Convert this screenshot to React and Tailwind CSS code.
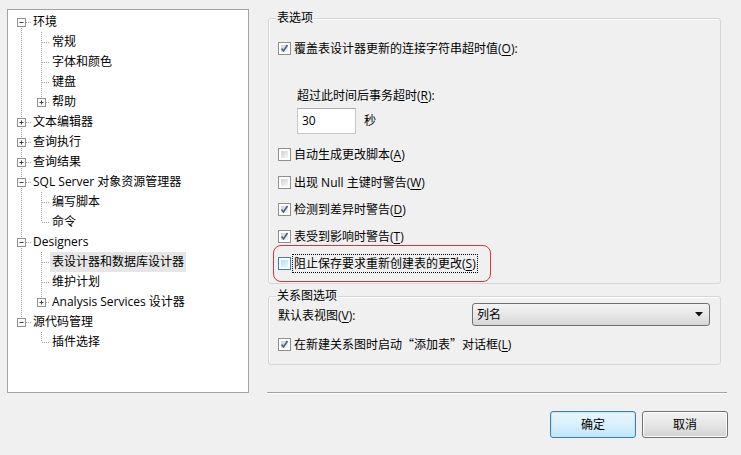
import React from "react";

const tree = [
  { label: "环境", level: 0, box: "minus" },
  { label: "常规", level: 1 },
  { label: "字体和颜色", level: 1 },
  { label: "键盘", level: 1 },
  { label: "帮助", level: 1, box: "plus" },
  { label: "文本编辑器", level: 0, box: "plus" },
  { label: "查询执行", level: 0, box: "plus" },
  { label: "查询结果", level: 0, box: "plus" },
  { label: "SQL Server 对象资源管理器", level: 0, box: "minus" },
  { label: "编写脚本", level: 1 },
  { label: "命令", level: 1 },
  { label: "Designers", level: 0, box: "minus" },
  { label: "表设计器和数据库设计器", level: 1, selected: true },
  { label: "维护计划", level: 1 },
  { label: "Analysis Services 设计器", level: 1, box: "plus" },
  { label: "源代码管理", level: 0, box: "minus" },
  { label: "插件选择", level: 1 },
];

// vertical runs for child lines: [x, y1, y2]
const childRuns = [
  [33.5, 20, 90],
  [33.5, 180, 210],
  [33.5, 240, 290],
  [33.5, 320, 330],
];

function TreeLines() {
  return (
    <svg className="absolute left-0 top-[2px]" width="240" height="380">
      <g stroke="#a0a0a0" strokeWidth="1" strokeDasharray="1 1">
        <line x1="13.5" y1="10" x2="13.5" y2="310" />
        {childRuns.map(([x, a, b], i) => (
          <line key={i} x1={x} y1={a} x2={x} y2={b} />
        ))}
        {tree.map((t, i) => {
          const y = i * 20 + 10.5;
          if (t.level === 0) return <line key={i} x1="18" y1={y} x2="23" y2={y} />;
          return <line key={i} x1={t.box ? 38 : 34} y1={y} x2="42" y2={y} />;
        })}
      </g>
      {tree.map((t, i) => {
        if (!t.box) return null;
        const cx = t.level === 0 ? 13 : 33;
        const y = i * 20 + 6;
        return (
          <g key={"b" + i}>
            <rect x={cx - 3.5} y={y + 0.5} width="8" height="8" fill="#fbfbfb" stroke="#919191" />
            <line x1={cx - 1.5} y1={y + 4.5} x2={cx + 2.5} y2={y + 4.5} stroke="#404040" />
            {t.box === "plus" && (
              <line x1={cx + 0.5} y1={y + 2.5} x2={cx + 0.5} y2={y + 6.5} stroke="#404040" />
            )}
          </g>
        );
      })}
    </svg>
  );
}

function Key({ text, k, after = "" }) {
  return (
    <span>
      {text}(<span className="underline underline-offset-2">{k}</span>){after}
    </span>
  );
}

function Checkbox({ checked, hover }) {
  return (
    <span
      className={
        "relative inline-flex w-[13px] h-[13px] shrink-0 p-[2px] border bg-white " +
        (hover ? "border-[#3c7fb1]" : "border-[#8f8f8f]")
      }
    >
      <span
        className={
          "w-full h-full bg-gradient-to-br " +
          (hover ? "from-[#b1dffd] to-[#e9f7fe]" : "from-[#d2d2d2] to-[#f6f6f6]")
        }
      />
      {checked && (
        <svg className="absolute left-[1px] top-[1px]" width="9" height="9" viewBox="0 0 9 9">
          <path d="M1.5 4.5 L3.5 7 L7.5 1" fill="none" stroke="#4a5d8f" strokeWidth="1.6" />
        </svg>
      )}
    </span>
  );
}

function CheckRow({ checked, children, className = "" }) {
  return (
    <div className={"h-[20px] flex items-center gap-[3px] " + className}>
      <Checkbox checked={checked} />
      <span className="pt-[1px]">{children}</span>
    </div>
  );
}

function Group({ title, className, children }) {
  return (
    <div
      className={
        "relative border border-[#d6d6d6] rounded-[3px] shadow-[inset_1px_1px_0_#ffffff] pl-[9px] " +
        className
      }
    >
      <span className="absolute left-[7px] -top-[9px] px-[1px] bg-[#f0f0f0] leading-[16px]">
        {title}
      </span>
      {children}
    </div>
  );
}

export default function App() {
  return (
    <div className="w-[741px] h-[455px] bg-[#f0f0f0] flex text-[12px] text-black font-['Open_Sans','Noto_Sans_CJK_SC',sans-serif] overflow-hidden">
      <div className="ml-[7px] mt-[9px] w-[242px] h-[384px] border border-[#a3a3a3] bg-white relative">
        <TreeLines />
        <div className="relative pt-[2px]">
          {tree.map((t, i) => (
            <div
              key={i}
              className={"h-[20px] flex items-center " + (t.level === 0 ? "pl-[23px]" : "pl-[42px]")}
            >
              <span
                className={
                  "px-[2px] h-[20px] leading-[20px] whitespace-nowrap " +
                  (t.selected ? "bg-[#e6e6e6]" : "")
                }
              >
                {t.label}
              </span>
            </div>
          ))}
        </div>
      </div>

      <div className="ml-[19px] w-[461px] pt-[18px] flex flex-col">
        <Group title="表选项" className="w-[453px] h-[266px]">
          <CheckRow checked className="mt-[19px]">
            <Key text="覆盖表设计器更新的连接字符串超时值" k="O" after=":" />
          </CheckRow>
          <div className="mt-[28px] ml-[19px] h-[20px] flex items-center">
            <Key text="超过此时间后事务超时" k="R" after=":" />
          </div>
          <div className="mt-[2px] ml-[19px] flex items-center gap-[8px]">
            <div className="w-[59px] h-[26px] bg-white border border-[#c5c5c5] border-t-[#abadb3] flex items-center pl-[4px]">
              30
            </div>
            <span>秒</span>
          </div>
          <CheckRow className="mt-[10px]">
            <Key text="自动生成更改脚本" k="A" />
          </CheckRow>
          <CheckRow className="mt-[8px]">
            <Key text="出现 Null 主键时警告" k="W" />
          </CheckRow>
          <CheckRow checked className="mt-[7px]">
            <Key text="检测到差异时警告" k="D" />
          </CheckRow>
          <CheckRow checked className="mt-[7px]">
            <Key text="表受到影响时警告" k="T" />
          </CheckRow>
          <div className="-mt-[1px] -ml-[5px] w-[218px] h-[37px] border border-[#d9343f] rounded-[8px] pl-[4px] flex items-center gap-[2px]">
            <Checkbox hover />
            <span className="outline outline-1 outline-dotted outline-black px-[1px] leading-[17px]">
              <Key text="阻止保存要求重新创建表的更改" k="S" />
            </span>
          </div>
        </Group>

        <Group title="关系图选项" className="mt-[12px] w-[453px] h-[69px] pr-[10px]">
          <div className="mt-[6px] h-[23px] flex items-center justify-between">
            <span className="pt-[3px]">
              <Key text="默认表视图" k="V" after=":" />
            </span>
            <div className="w-[238px] h-[23px] rounded-[3px] border border-[#707070] bg-gradient-to-b from-[#f3f3f3] via-[#e8e8e8] to-[#d6d6d6] flex items-center justify-between pl-[4px] pr-[6px]">
              <span>列名</span>
              <svg width="8" height="5" viewBox="0 0 8 5">
                <path d="M0 0 H8 L4 4.5 Z" fill="#111" />
              </svg>
            </div>
          </div>
          <CheckRow checked className="mt-[8px]">
            <span>
              在新建关系图时启动
              <span className="font-['Noto_Sans_CJK_SC',sans-serif]">“添加表”</span>
              对话框(<span className="underline underline-offset-2">L</span>)
            </span>
          </CheckRow>
        </Group>

        <div className="mt-[27px] -ml-[1px] w-[460px] h-[2px] border-t border-[#a0a0a0] border-b border-b-white" />

        <div className="mt-[17px] flex justify-end gap-[6px] pr-[1px]">
          <button className="w-[86px] h-[27px] rounded-[3px] border border-[#3c7fb1] bg-gradient-to-b from-[#eaf6fd] via-[#d9f0fc] to-[#bee6fd] shadow-[inset_0_0_0_1px_#c4e5f6]">
            确定
          </button>
          <button className="w-[86px] h-[27px] rounded-[3px] border border-[#707070] bg-gradient-to-b from-[#f2f2f2] via-[#e6e6e6] to-[#d3d3d3] shadow-[inset_0_0_0_1px_#fcfcfc]">
            取消
          </button>
        </div>
      </div>
    </div>
  );
}
